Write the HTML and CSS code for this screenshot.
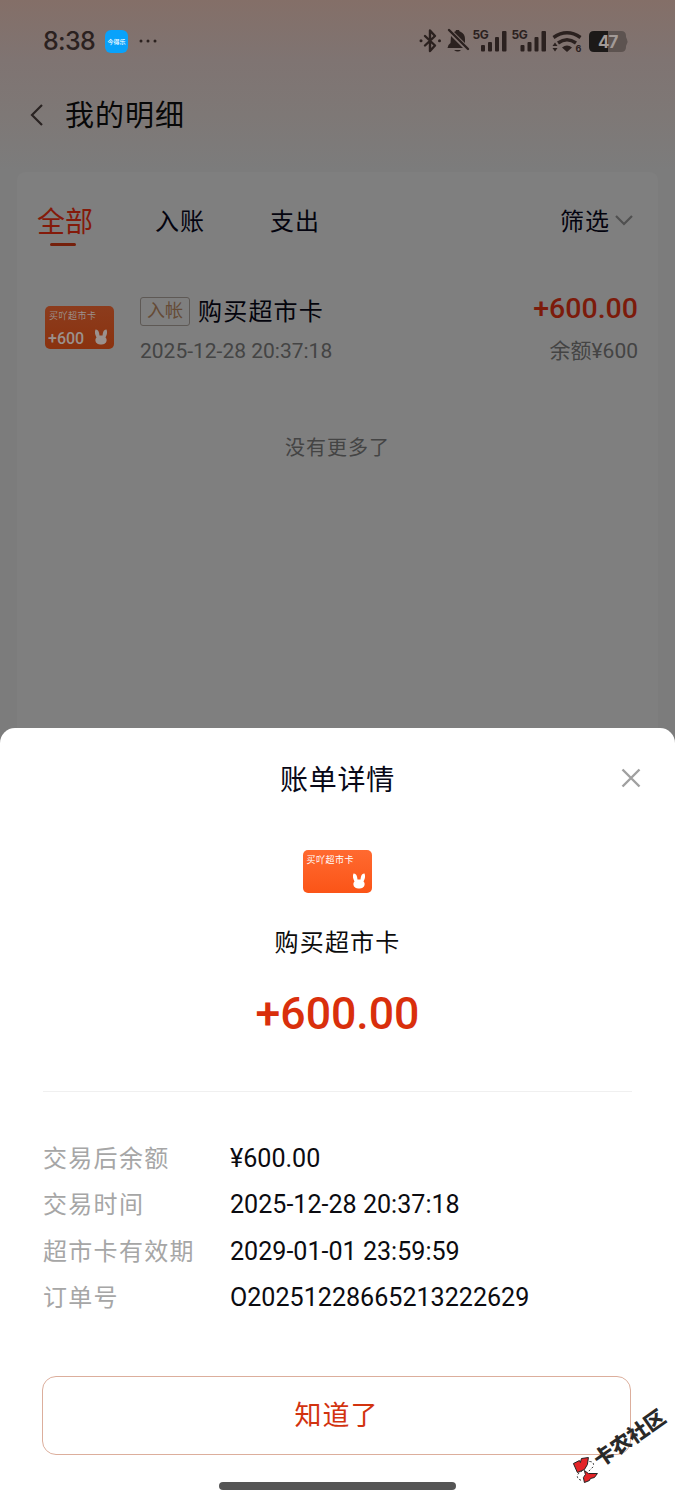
FILE: index.html
```
<!DOCTYPE html>
<html lang="zh-CN">
<head>
<meta charset="utf-8">
<title>我的明细</title>
<link rel="stylesheet" href="styles.css">
</head>
<body>
<div class="screen">
  <div class="status">
    <span class="clock">8:38</span>
    <span class="app">今得乐</span>
    <svg class="dots" width="20" height="6" viewBox="0 0 20 6"><circle cx="3" cy="3" r="1.500"/><circle cx="10" cy="3" r="1.500"/><circle cx="17" cy="3" r="1.500"/></svg>
    <svg class="signals" width="212" height="30" viewBox="0 0 212 30">
      <g fill="none" stroke="#2b211f" stroke-width="2.400" stroke-linejoin="round" stroke-linecap="round">
        <path d="M6 10 16 19.500 11 25V4.500L16 10 6 19.500"/>
        <path d="M30 4 49 23"/>
      </g>
      <g fill="#2b211f">
        <circle cx="2" cy="14.800" r="1.500"/><circle cx="20.500" cy="14.800" r="1.500"/>
        <path d="M32 10 44 22H28.500q0-3 3-5z"/><path d="M35 6q2-.5 2-2h3q0 1.500 2 2 4 2 4 7v4z"/><path d="M35 24h7q-3 3-7 0z"/>
        <text class="net" x="53.500" y="12.500">5G</text><text class="net" x="92.500" y="12.500">5G</text>
        <g id="bars"><rect x="62" y="19" width="4" height="6.500" rx="1"/><rect x="69" y="16" width="4" height="9.500" rx="1"/><rect x="76" y="11" width="4" height="14.500" rx="1"/><rect x="83" y="5" width="4.500" height="20.500" rx="1"/></g>
        <use href="#bars" x="39.500"/>
        <path d="M143 21.500q5-4 10 0l-5 4.500zM136 16.500l2.500 3.500h-5zM136 25.500l2.500-3.500h-5z"/>
        <text class="six" x="156.500" y="25.500">6</text>
      </g>
      <g fill="none" stroke="#2b211f" stroke-width="3.400"><path d="M134.500 11.500q13.500-9.500 27 0"/><path d="M139 17q9-6.500 18 0"/></g>
      <path d="M175 5h14v21h-14q-5 0-5-5V10q0-5 5-5z" fill="#1c1918"/>
      <path d="M189 5h13q5 0 5 5v1l1 2.500q1 2 0 4l-1 2.500v1q0 5-5 5h-13z" fill="#5d5350"/>
      <text class="level" x="179" y="21.500">47</text>
    </svg>
  </div>
  <div class="nav">
    <svg width="14" height="24" viewBox="0 0 14 24"><path d="M12 2 2 12 12 22" fill="none" stroke="#2a2322" stroke-width="2.200"/></svg>
    <h1>我的明细</h1>
  </div>
  <div class="panel">
    <div class="tabs">
      <span class="tab on">全部</span><span class="tab in">入账</span><span class="tab out">支出</span>
      <span class="filter">筛选<svg width="20" height="12" viewBox="0 0 20 12"><path d="M2 2l8 8 8-8" fill="none" stroke="#505050" stroke-width="2.200"/></svg></span>
    </div>
    <div class="entry">
      <div class="card dim"><span class="brand">买吖超市卡</span><span class="worth">+600</span>
        <svg class="rabbit" width="14" height="16" viewBox="0 0 14 16"><path d="M1.500.5Q5 0 5.500 6.500h3Q9 0 12.500.5 14 4 11.500 8.500q2 2 .5 5Q10 16 7 15.500 4 16 2 13.500.5 10.500 2.500 8.500 0 4 1.500.5z"/></svg></div>
      <div class="what"><div class="line"><span class="tag">入帐</span><span class="name">购买超市卡</span></div><div class="date">2025-12-28 20:37:18</div></div>
      <div class="sum"><div class="plus">+600.00</div><div class="left">余额¥600</div></div>
    </div>
    <div class="end">没有更多了</div>
  </div>
  <div class="sheet">
    <div class="head"><h2>账单详情</h2>
      <svg class="close" width="20" height="20" viewBox="0 0 20 20"><path d="M1.500 1.500l17 17M18.500 1.500l-17 17" stroke="#a0a0a0" stroke-width="2.400"/></svg></div>
    <div class="card"><span class="brand">买吖超市卡</span>
      <svg class="rabbit" width="14" height="16" viewBox="0 0 14 16"><path d="M1.500.5Q5 0 5.500 6.500h3Q9 0 12.500.5 14 4 11.500 8.500q2 2 .5 5Q10 16 7 15.500 4 16 2 13.500.5 10.500 2.500 8.500 0 4 1.500.5z"/></svg></div>
    <div class="product">购买超市卡</div>
    <div class="amount">+600.00</div>
    <dl class="facts">
      <dt>交易后余额</dt><dd>¥600.00</dd>
      <dt>交易时间</dt><dd>2025-12-28 20:37:18</dd>
      <dt>超市卡有效期</dt><dd>2029-01-01 23:59:59</dd>
      <dt>订单号</dt><dd class="order">O20251228665213222629</dd>
    </dl>
    <button class="ok">知道了</button>
    <div class="home"></div>
  </div>
  <div class="stamp">
    <svg width="26" height="28" viewBox="0 0 26 28"><g fill="#e32428" stroke="#222" stroke-width="1"><path d="M1 8 7 5l1 2 1-4 7-1-1 7-3 5-7 3z"/><path d="M12 15l4 3 9 0-3 4-4 1-1 2-5 2-1-5 2-3z"/></g><path d="M17 6q5 0 4 5l-5 5M10 15l-5 4q-1 5 5 6" fill="none" stroke="#333" stroke-dasharray="2 2"/></svg>
    <span>卡农社区</span>
  </div>
</div>
</body>
</html>
```
FILE: styles.css
```
* { box-sizing: border-box; }
body { margin: 0; font-family: Roboto, "Noto Sans CJK SC", sans-serif; }
h1, h2, dl, dd { margin: 0; font-weight: 400; }
.screen { position: relative; width: 675px; height: 1500px; overflow: hidden; display: flex; flex-direction: column; background: linear-gradient(#846f68 0, #7f7472 60px, #7e7876 115px, #7c7c7c 170px); }
.status { height: 80px; display: flex; align-items: center; padding: 2px 46px 0 43px; flex: none; }
.clock { font: 500 25px/30px Inter, sans-serif; color: #2b211f; width: 62px; letter-spacing: -.7px; }
.app { width: 23px; height: 23px; border-radius: 6px; background: #08a2fb; color: #fff; font-size: 6px; font-weight: 500; line-height: 23px; text-align: center; white-space: nowrap; }
.dots { margin-left: 10px; fill: #2b211f; }
.signals { margin-left: auto; margin-right: -2px; flex: none; }
.net { font: 700 12px Inter, sans-serif; letter-spacing: -.5px; }
.six { font: 700 9px Inter, sans-serif; }
.level { font: 700 17px Inter, sans-serif; fill: #a29a97; letter-spacing: -1px; }
.nav { height: 70px; flex: none; display: flex; align-items: center; padding-left: 30px; }
.nav h1 { margin-left: 21px; padding-top: 2px; font-size: 29px; letter-spacing: 1px; line-height: 40px; color: #080808; }
.panel { margin: 22px 17px 0; height: 570px; flex: none; border-radius: 8px 8px 0 0; background: #7f7f7f; }
.tabs { height: 84px; display: flex; align-items: center; padding: 11px 24px 0 20px; color: #04040f; font-size: 24px; letter-spacing: 1px; }
.tab.on { position: relative; font-size: 28px; letter-spacing: 0; color: #841a0a; width: 118px; }
.tab.on::after { content: ""; position: absolute; left: 13px; bottom: -6px; width: 26px; height: 3px; border-radius: 2px; background: #75200b; }
.tab.in { width: 115px; }
.filter { margin-left: auto; display: flex; align-items: center; gap: 4px; }
.entry { display: flex; align-items: flex-start; padding: 36px 20px 0 28px; height: 150px; }
.card { position: relative; width: 69px; height: 43px; border-radius: 5px; background: linear-gradient(#ff6a30, #fb5417); color: #fff; flex: none; }
.card.dim { margin-top: 14px; background: linear-gradient(#8c3c1d, #8a320f); color: #9b918d; }
.brand { position: absolute; left: 4px; top: 4px; font-size: 9px; line-height: 12px; letter-spacing: .5px; white-space: nowrap; }
.worth { position: absolute; left: 3px; bottom: 2px; font-size: 16px; line-height: 16px; font-weight: 500; }
.rabbit { position: absolute; right: 6px; bottom: 4px; fill: currentColor; }
.what { margin-left: 26px; }
.line { display: flex; align-items: center; height: 38px; gap: 8px; }
.tag { width: 50px; height: 29px; border: 1px solid #5e5955; border-radius: 3px; color: #654b36; font-size: 18px; line-height: 26px; text-align: center; }
.name { font-size: 24px; letter-spacing: 1.200px; color: #04040c; line-height: 36px; padding-top: 1px; }
.date { font-size: 21px; line-height: 30px; color: #444; margin-top: 6px; }
.sum { margin-left: auto; text-align: right; }
.plus { font-size: 28.500px; font-weight: 500; line-height: 33px; color: #7c1b0b; }
.left { font-size: 21px; line-height: 30px; color: #444; margin-top: 11px; }
.end { padding-top: 27px; text-align: center; font-size: 20px; letter-spacing: 1px; line-height: 30px; color: #444; }
.sheet { position: absolute; left: 0; right: 0; top: 728px; bottom: 0; border-radius: 15px 15px 0 0; background: #fff; display: flex; flex-direction: column; align-items: center; }
.head { width: 100%; height: 100px; padding: 0 34px 0 54px; display: flex; align-items: center; }
.head h2 { flex: 1; text-align: center; font-size: 28px; letter-spacing: .7px; color: #080817; }
.sheet .card { margin-top: 22px; margin-right: 1px; }
.product { margin-top: 32px; font-size: 24px; line-height: 36px; letter-spacing: 1.200px; color: #0c0c0c; }
.amount { margin-top: 27px; font-size: 44.600px; font-weight: 500; line-height: 52px; color: #d92f0c; }
.facts { margin-top: 51px; width: 589px; border-top: 1px solid #f0f0f0; padding-top: 43px; display: grid; grid-template-columns: 187px 1fr; grid-auto-rows: 46.500px; align-items: center; }
.facts dt { color: #a6a6a6; font-size: 24px; letter-spacing: 1.300px; line-height: 36px; padding-top: 1px; }
.facts dd { color: #0b0b10; font-size: 25.100px; }
.ok { flex: none; margin: 55px 2px 0 0; width: 589px; height: 79px; padding-bottom: 5px; border: 1.500px solid #dcae9c; border-radius: 14px; background: #fff; color: #d2330f; font: 27px "Noto Sans CJK SC", sans-serif; letter-spacing: 1px; }
.home { margin-top: 27px; width: 237px; height: 8px; border-radius: 4px; background: #555; }
.stamp { position: absolute; left: 565px; top: 1432px; display: flex; align-items: center; gap: 0; transform: rotate(-35deg); color: #292929; }
.stamp svg { transform: rotate(35deg); }
.stamp span { font-size: 20.500px; font-weight: 900; line-height: 26px; white-space: nowrap; }
```
